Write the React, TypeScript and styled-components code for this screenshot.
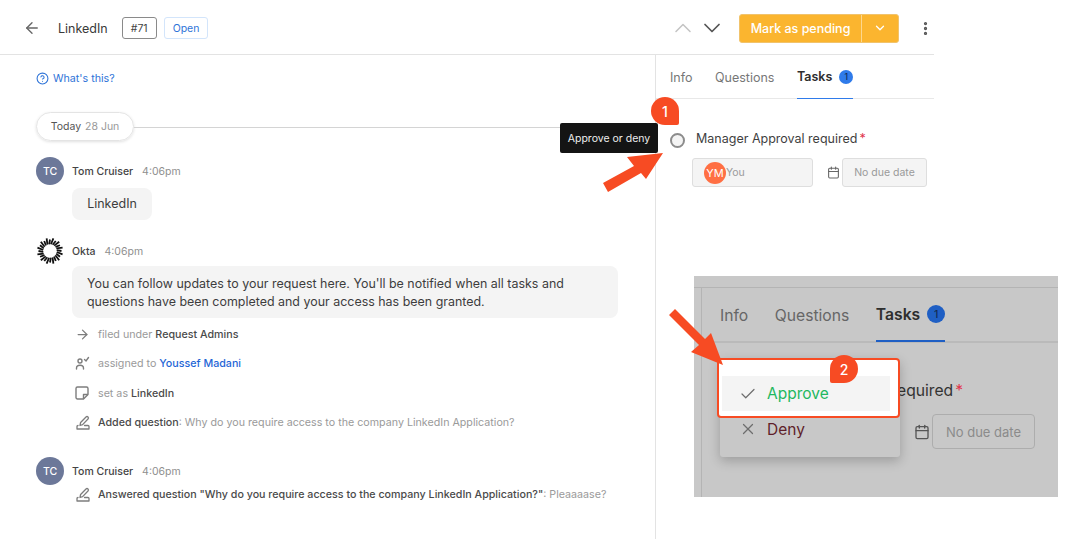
import React from 'react';
import styled, { createGlobalStyle } from 'styled-components';
import { ArrowLeft, ArrowRight, Calendar, Check, ChevronDown, ChevronUp, CircleHelp, EllipsisVertical, X } from 'lucide-react';

const GlobalStyle = createGlobalStyle`
  html, body { margin: 0; padding: 0; background: #fff; }
  * { box-sizing: border-box; }
`;

const Page = styled.div`
  position: relative;
  width: 1065px;
  height: 539px;
  overflow: hidden;
  background: #fff;
  font-family: Inter, "Liberation Sans", sans-serif;
  color: #333;
`;

const Main = styled.div`
  width: 934px;
  height: 539px;
  display: flex;
  flex-direction: column;
`;

const Header = styled.header`
  height: 55px;
  flex: none;
  display: flex;
  align-items: center;
  border-bottom: 1px solid #e3e3e3;
  padding: 2px 0 0 23px;
`;

const HeaderTitle = styled.span`
  font-size: 12.5px;
  margin: 0 14px 0 17px;
  color: #3a3a3a;
`;

const Tag = styled.span<{ $blue?: boolean }>`
  height: 22px;
  display: flex;
  align-items: center;
  padding: 0 8px;
  margin-right: 7px;
  font-size: 10.5px;
  border-radius: 3px;
  border: 1px solid ${p => (p.$blue ? '#d3e5fb' : '#8a8a8a')};
  color: ${p => (p.$blue ? '#2f74d8' : '#444')};
`;

const HeaderActions = styled.div`
  margin-left: auto;
  display: flex;
  align-items: center;
`;

const Nav = styled.button<{ $dim?: boolean }>`
  border: 0;
  background: none;
  padding: 0;
  margin-right: 1px;
  display: flex;
  color: ${p => (p.$dim ? '#c4c4c4' : '#555')};
`;

const Split = styled.div`
  display: flex;
  width: 160px;
  height: 29px;
  margin: 0 18px 0 12px;
  border-radius: 3px;
  background: #fbb52f;
  border: 1px solid #f1c36c;
  color: #fff;
  font-size: 12.5px;
  font-weight: 500;
`;

const SplitLabel = styled.span`
  width: 122px;
  display: flex;
  align-items: center;
  justify-content: center;
  border-right: 1px solid #fdd78e;
`;

const SplitCaret = styled.span`
  flex: 1;
  display: flex;
  align-items: center;
  justify-content: center;
`;

const MoreButton = styled.span`
  display: flex;
  color: #555;
  width: 17px;
  justify-content: center;
`;

const Body = styled.div`
  flex: 1;
  display: flex;
`;

const Feed = styled.section`
  width: 656px;
  flex: none;
  border-right: 1px solid #e3e3e3;
  padding: 16px 37px 0 36px;
`;

const Help = styled.a`
  display: flex;
  align-items: center;
  gap: 4px;
  color: #2f74d8;
  font-size: 10.7px;
  height: 14px;
  margin-bottom: 27px;
`;

const DateRow = styled.div`
  display: flex;
  align-items: center;
  margin-right: -37px;
  margin-bottom: 16px;
`;

const DatePill = styled.div`
  width: 98px;
  height: 29px;
  flex: none;
  display: flex;
  align-items: center;
  justify-content: center;
  gap: 4px;
  font-size: 10.5px;
  color: #555;
  border: 1px solid #e4e4e4;
  border-radius: 15px;
  box-shadow: 0 1px 3px rgba(0, 0, 0, 0.12);
  span { color: #999; }
`;

const DateLine = styled.div`
  flex: 1;
  height: 1px;
  margin-top: 1px;
  background: #d4d4d4;
`;

const Author = styled.div<{ $gap?: number; $after?: number }>`
  display: flex;
  align-items: center;
  gap: 8px;
  height: 28px;
  margin-top: ${p => p.$gap ?? 0}px;
  margin-bottom: ${p => p.$after ?? 3}px;
`;

const Avatar = styled.div`
  width: 28px;
  height: 28px;
  border-radius: 50%;
  background: #6c7899;
  color: #fff;
  font-size: 10.5px;
  font-weight: 500;
  display: flex;
  align-items: center;
  justify-content: center;
`;

const AuthorName = styled.span`
  font-size: 10.5px;
  font-weight: 500;
  color: #444;
`;

const Time = styled.span`
  font-size: 10.5px;
  color: #8f8f8f;
  margin-left: 1px;
`;

const Bubble = styled.div<{ $wide?: boolean }>`
  margin-left: 36px;
  background: #f4f4f4;
  border-radius: 8px;
  font-size: ${p => (p.$wide ? '12.45px' : '12.5px')};
  line-height: 18px;
  color: #3d3d3d;
  width: ${p => (p.$wide ? '546px' : '80px')};
  margin-top: ${p => (p.$wide ? '-2px' : '0')};
  margin-bottom: ${p => (p.$wide ? '2px' : '0')};
  padding: ${p => (p.$wide ? '9px 15px 7px' : '7px 0')};
  text-align: ${p => (p.$wide ? 'left' : 'center')};
`;

const Event = styled.div`
  height: 29.3px;
  margin-left: 36px;
  display: flex;
  align-items: center;
  font-size: 10.7px;
  color: #9a9a9a;
  white-space: nowrap;
`;

const EventIcon = styled.span`
  width: 26px;
  flex: none;
  padding-left: 3px;
  display: flex;
  color: #7d7d7d;
`;

const Strong = styled.b<{ $link?: boolean }>`
  font-weight: 500;
  margin-left: 3px;
  color: ${p => (p.$link ? '#1f66d6' : '#4a4a4a')};
`;

const StrongLead = styled.b`
  font-weight: 500;
  color: #4a4a4a;
`;

const Side = styled.aside`
  flex: 1;
  min-width: 0;
`;

const Tabs = styled.div<{ $large?: boolean }>`
  display: flex;
  align-items: center;
  height: ${p => (p.$large ? '55px' : '44px')};
  gap: ${p => (p.$large ? '26.5px' : '22.5px')};
  padding-left: ${p => (p.$large ? '18px' : '14px')};
  border-bottom: ${p => (p.$large ? '2px solid #bababa' : '1px solid #e8e8e8')};
`;

const Tab = styled.span<{ $active?: boolean; $large?: boolean }>`
  height: 100%;
  display: flex;
  align-items: center;
  gap: 7px;
  margin-bottom: -1px;
  font-size: ${p => (p.$large ? '15.7px' : '12.5px')};
  font-weight: ${p => (p.$active ? 600 : 400)};
  color: ${p => (p.$active ? '#2e2e2e' : p.$large ? '#666' : '#777')};
  border-bottom: ${p => (p.$active ? `${p.$large ? 2 : 1}px solid ${p.$large ? '#1f5fc4' : '#2f7bea'}` : '0')};
`;

const Badge = styled.span<{ $large?: boolean }>`
  width: ${p => (p.$large ? 18 : 14)}px;
  height: ${p => (p.$large ? 18 : 14)}px;
  border-radius: 50%;
  background: ${p => (p.$large ? '#1f5fc4' : '#2f7bea')};
  color: #132c54;
  font-size: ${p => (p.$large ? 10.5 : 8.5)}px;
  font-weight: 500;
  display: flex;
  align-items: center;
  justify-content: center;
`;

const TaskRow = styled.div`
  display: flex;
  align-items: center;
  gap: 11px;
  margin: 30px 0 0 14px;
  height: 18px;
  font-size: 12.5px;
  color: #3f3f3f;
  white-space: nowrap;
`;

const Radio = styled.span`
  width: 15px;
  height: 15px;
  margin-top: 4px;
  border-radius: 50%;
  border: 2px solid #8c8c8c;
  background: #f4f4f4;
`;

const Required = styled.span`
  color: #e0344b;
  margin-left: 2px;
`;

const FieldRow = styled.div`
  display: flex;
  align-items: center;
  margin: 11px 0 0 36px;
`;

const Field = styled.div<{ $w: number }>`
  width: ${p => p.$w}px;
  height: 29px;
  display: flex;
  align-items: center;
  justify-content: center;
  font-size: 10.5px;
  color: #9a9a9a;
  background: #f4f4f4;
  border: 1px solid #dedede;
  border-radius: 3px;
`;

const Assignee = styled(Field)`
  justify-content: flex-start;
  padding-left: 11px;
`;

const Initials = styled.span`
  width: 22px;
  height: 22px;
  flex: none;
  border-radius: 50%;
  background: #ff6f43;
  color: #fff;
  font-size: 11px;
  display: flex;
  align-items: center;
  justify-content: center;
`;

const CalendarWrap = styled.span`
  width: 28px;
  display: flex;
  justify-content: flex-end;
  padding-right: 1px;
  margin-right: 1px;
  color: #666;
`;

const Inset = styled.div`
  position: absolute;
  left: 694px;
  top: 276px;
  width: 364px;
  height: 221px;
  overflow: hidden;
  background: #c8c8c8;
  padding-top: 11px;
`;

const InsetRule = styled.div`
  height: 100%;
  border-top: 1px solid #b4b4b4;
`;

const InsetFrame = styled.div`
  height: 100%;
  margin-left: 7px;
  border-left: 1px solid #b4b4b4;
`;

const InsetTask = styled.div`
  margin: 39px 0 0 195px;
  font-size: 15.7px;
  line-height: 18px;
  color: #333;
  white-space: nowrap;
`;

const InsetFields = styled.div`
  display: flex;
  align-items: center;
  justify-content: flex-end;
  gap: 2px;
  margin: 14px 23px 0 0;
  color: #555;
`;

const InsetDate = styled.div`
  width: 103px;
  height: 35px;
  display: flex;
  align-items: center;
  justify-content: center;
  font-size: 13px;
  color: #8b8b8b;
  border: 1px solid #adadad;
  border-radius: 4px;
`;

const Menu = styled.div`
  position: absolute;
  left: 720px;
  top: 358px;
  width: 180px;
  height: 99px;
  background: #c8c8c8;
  border-radius: 3px;
  box-shadow: 0 4px 12px rgba(0, 0, 0, 0.22);
  padding-top: 54px;
`;

const MenuItem = styled.div<{ $color: string }>`
  display: flex;
  align-items: center;
  gap: 10px;
  height: 36px;
  padding: 0 0 2px 19px;
  font-size: 15.5px;
  color: ${p => p.$color};
  svg { color: #6d6d6d; }
`;

const Spotlight = styled.div`
  position: absolute;
  left: 717px;
  top: 358px;
  width: 183px;
  height: 60px;
  background: #fff;
  border: 2px solid #f74b23;
  border-radius: 4px;
  padding: 16px 8px 6px 3px;
`;

const SpotlightRow = styled(MenuItem)`
  background: #f4f4f4;
  height: 35px;
  padding: 0 0 0 17px;
`;

const Tooltip = styled.div`
  position: absolute;
  left: 560px;
  top: 123px;
  width: 98px;
  height: 30px;
  background: #141414;
  border-radius: 2px;
  color: #eee;
  font-size: 10.5px;
  display: flex;
  align-items: center;
  justify-content: center;
`;

const Pin = styled.div<{ $x: number; $y: number; $flip?: boolean }>`
  position: absolute;
  left: ${p => p.$x}px;
  top: ${p => p.$y}px;
  width: 28px;
  height: 28px;
  background: #f74b23;
  color: #fff;
  font-size: 14px;
  font-weight: 500;
  display: flex;
  align-items: center;
  justify-content: center;
  border-radius: ${p => (p.$flip ? '50% 50% 50% 2px' : '50% 50% 2px 50%')};
`;

const ArrowMark = styled.svg`
  position: absolute;
  left: 0;
  top: 0;
  pointer-events: none;
`;

const OktaMark = () => (
  <svg width="28" height="28" viewBox="0 0 28 28">
    {Array.from({ length: 24 }, (_, i) => {
      const a = (i / 24) * Math.PI * 2;
      const outer = i % 2 ? 13 : 11.5;
      return (
        <line
          key={i}
          x1={14 + Math.cos(a - 0.12) * 6.8}
          y1={14 + Math.sin(a - 0.12) * 6.8}
          x2={14 + Math.cos(a) * outer}
          y2={14 + Math.sin(a) * outer}
          stroke="#111"
          strokeWidth="1.8"
        />
      );
    })}
  </svg>
);

const AssignedIcon = () => (
  <svg width="15" height="15" viewBox="0 0 15 15" fill="none" stroke="currentColor" strokeWidth="1.4" strokeLinecap="round">
    <circle cx="5" cy="5" r="2" />
    <path d="M1.5 13v-.8a3.5 3 0 0 1 7 0v.8" />
    <path d="M9.5 3.5l1.5 1.5 2.5-3.5" />
  </svg>
);

const NoteIcon = () => (
  <svg width="14" height="14" viewBox="0 0 14 14" fill="none" stroke="currentColor" strokeWidth="1.4" strokeLinejoin="round">
    <path d="M2.5 1h9a1.5 1.5 0 0 1 1.5 1.5V8.5L8.5 13h-6A1.5 1.5 0 0 1 1 11.5v-9A1.5 1.5 0 0 1 2.5 1z" />
    <path d="M8.5 13V8.5H13" />
  </svg>
);

const SignIcon = () => (
  <svg width="16" height="16" viewBox="0 0 16 16" fill="none" stroke="currentColor" strokeWidth="1.3" strokeLinejoin="round" strokeLinecap="round">
    <path d="M5 10.5l.6-3L11 2a1.3 1.3 0 0 1 2 2l-5.4 5.6-2.6.9z" />
    <path d="M9.5 10.5H13a1 1 0 0 1 1 1V14H2v-2.5a1 1 0 0 1 1-1" />
  </svg>
);

export default function App() {
  return (
    <Page>
      <GlobalStyle />
      <Main>
        <Header>
          <ArrowLeft size={18} strokeWidth={1.8} color="#666" />
          <HeaderTitle>LinkedIn</HeaderTitle>
          <Tag>#71</Tag>
          <Tag $blue>Open</Tag>
          <HeaderActions>
            <Nav $dim><ChevronUp size={28} strokeWidth={1.3} /></Nav>
            <Nav><ChevronDown size={28} strokeWidth={1.5} /></Nav>
            <Split>
              <SplitLabel>Mark as pending</SplitLabel>
              <SplitCaret><ChevronDown size={14} strokeWidth={2.2} /></SplitCaret>
            </Split>
            <MoreButton><EllipsisVertical size={17} strokeWidth={2.6} /></MoreButton>
          </HeaderActions>
        </Header>
        <Body>
          <Feed>
            <Help><CircleHelp size={13} strokeWidth={2} />What's this?</Help>
            <DateRow>
              <DatePill>Today <span>28 Jun</span></DatePill>
              <DateLine />
            </DateRow>
            <Author>
              <Avatar>TC</Avatar>
              <AuthorName>Tom Cruiser</AuthorName>
              <Time>4:06pm</Time>
            </Author>
            <Bubble>LinkedIn</Bubble>
            <Author $gap={17}>
              <OktaMark />
              <AuthorName>Okta</AuthorName>
              <Time>4:06pm</Time>
            </Author>
            <Bubble $wide>
              You can follow updates to your request here. You'll be notified when all tasks and questions have been completed and your access has been granted.
            </Bubble>
            <Event><EventIcon><ArrowRight size={15} strokeWidth={2} /></EventIcon>filed under<Strong>Request Admins</Strong></Event>
            <Event><EventIcon><AssignedIcon /></EventIcon>assigned to<Strong $link>Youssef Madani</Strong></Event>
            <Event><EventIcon><NoteIcon /></EventIcon>set as<Strong>LinkedIn</Strong></Event>
            <Event><EventIcon><SignIcon /></EventIcon><StrongLead>Added question</StrongLead>: Why do you require access to the company LinkedIn Application?</Event>
            <Author $gap={20} $after={-5}>
              <Avatar>TC</Avatar>
              <AuthorName>Tom Cruiser</AuthorName>
              <Time>4:06pm</Time>
            </Author>
            <Event><EventIcon><SignIcon /></EventIcon><StrongLead>Answered question "Why do you require access to the company LinkedIn Application?"</StrongLead>: Pleaaaase?</Event>
          </Feed>
          <Side>
            <Tabs>
              <Tab>Info</Tab>
              <Tab>Questions</Tab>
              <Tab $active>Tasks<Badge>1</Badge></Tab>
            </Tabs>
            <TaskRow>
              <Radio />
              <span>Manager Approval required<Required>*</Required></span>
            </TaskRow>
            <FieldRow>
              <Assignee $w={121}><Initials>YM</Initials>You</Assignee>
              <CalendarWrap><Calendar size={13} /></CalendarWrap>
              <Field $w={85}>No due date</Field>
            </FieldRow>
          </Side>
        </Body>
      </Main>

      <Inset>
        <InsetRule>
          <InsetFrame>
            <Tabs $large>
              <Tab $large>Info</Tab>
              <Tab $large>Questions</Tab>
              <Tab $large $active>Tasks<Badge $large>1</Badge></Tab>
            </Tabs>
            <InsetTask>equired<Required>*</Required></InsetTask>
            <InsetFields>
              <Calendar size={16} />
              <InsetDate>No due date</InsetDate>
            </InsetFields>
          </InsetFrame>
        </InsetRule>
      </Inset>
      <Menu>
        <MenuItem $color="#5f1f2a"><X size={18} strokeWidth={1.6} />Deny</MenuItem>
      </Menu>
      <Spotlight>
        <SpotlightRow $color="#1fb85f"><Check size={18} strokeWidth={1.6} />Approve</SpotlightRow>
      </Spotlight>

      <Tooltip>Approve or deny</Tooltip>
      <ArrowMark width="1065" height="539">
        <polygon points="663,153 627,157 634,166 603,183 608,192 641,173 646,179" fill="#f74b23" />
        <polygon points="723,365 691,352 699,345 669,315 675,309 705,339 711,333" fill="#f74b23" />
      </ArrowMark>
      <Pin $x={651} $y={97}>1</Pin>
      <Pin $x={830} $y={355} $flip>2</Pin>
    </Page>
  );
}
